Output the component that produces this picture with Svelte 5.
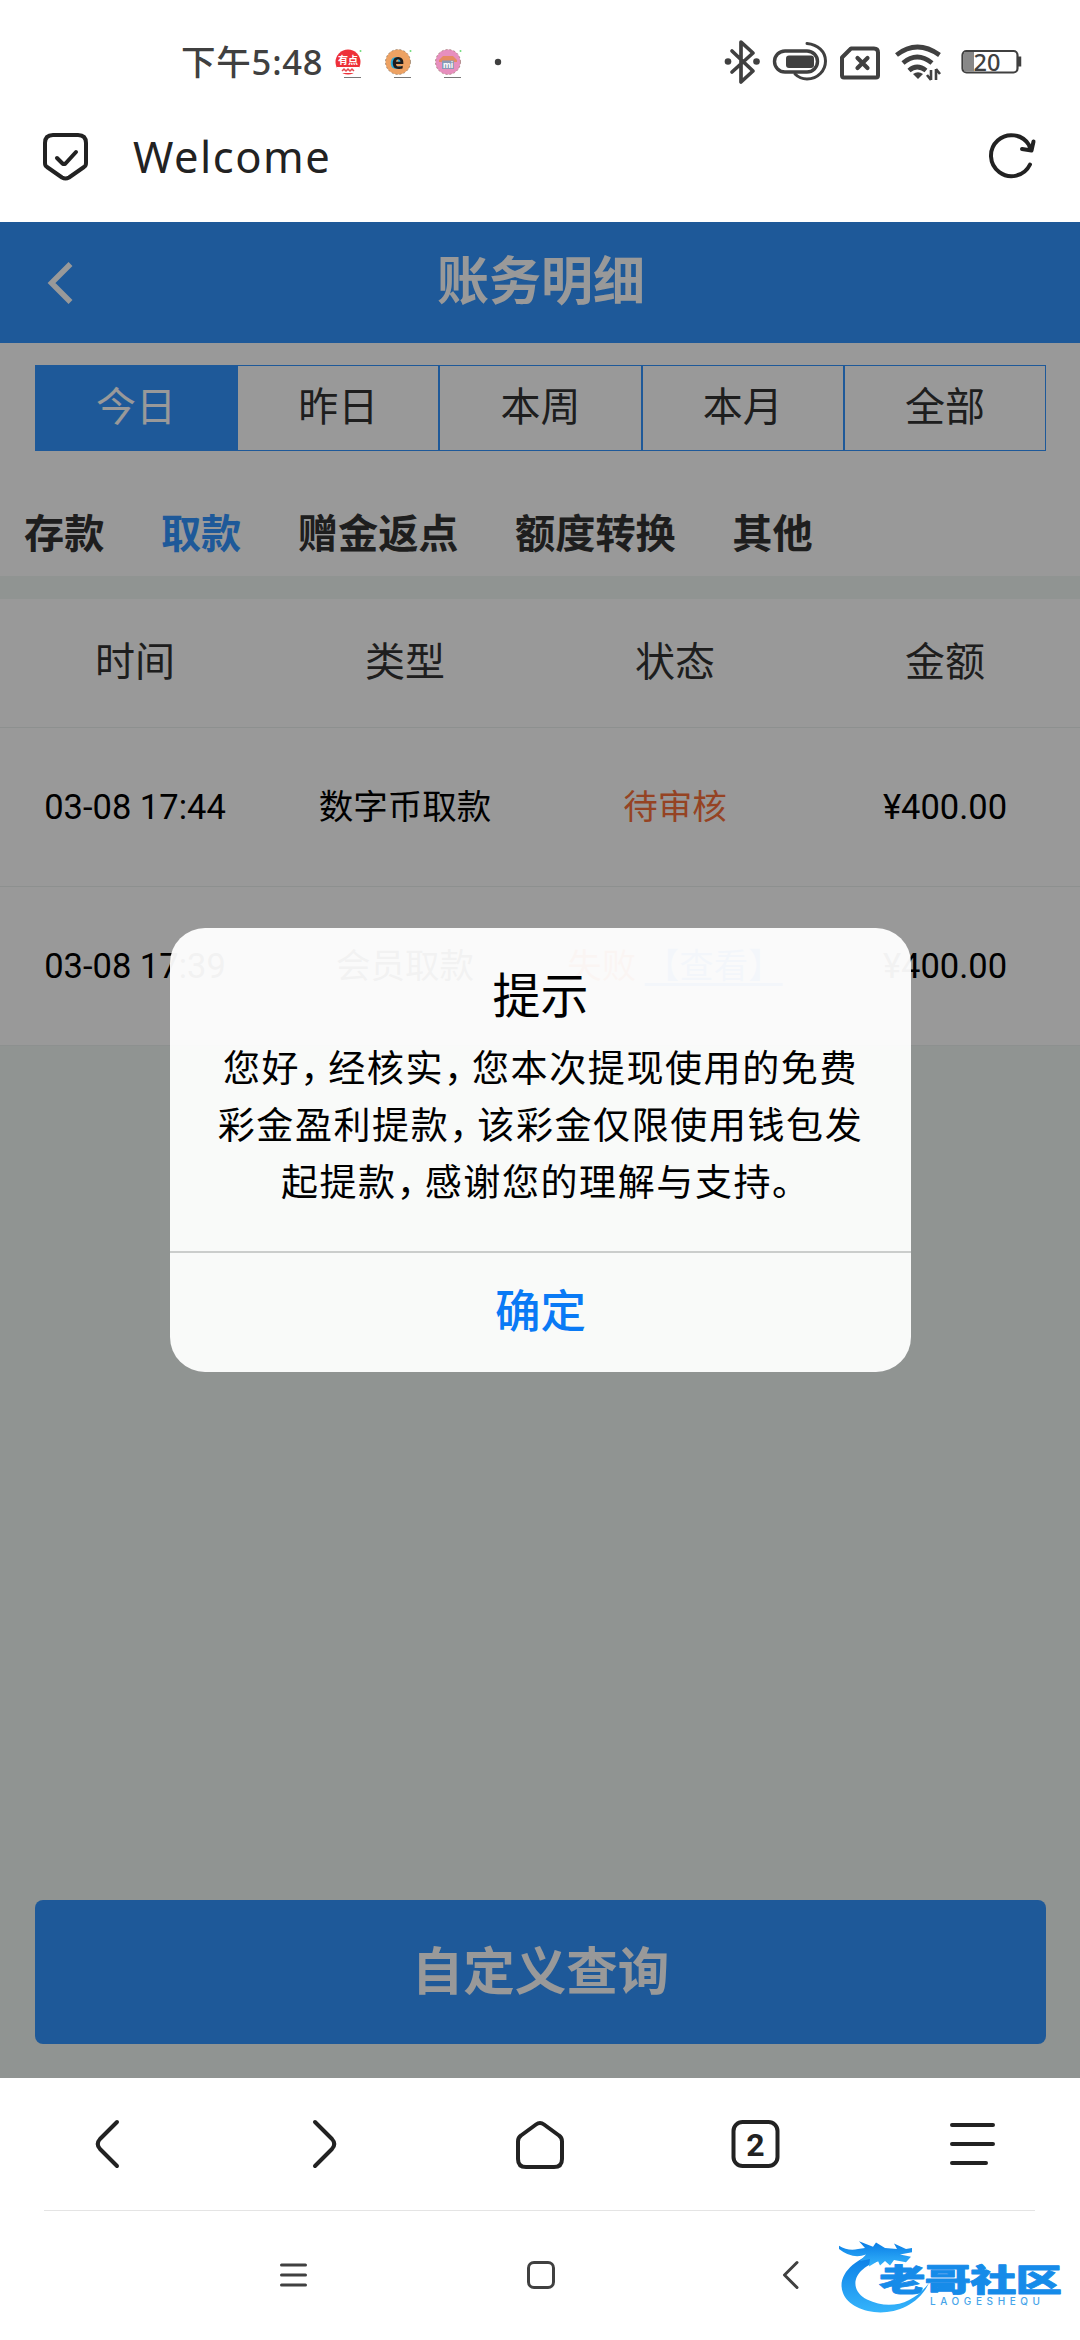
<script>
  const ranges = ['今日', '昨日', '本周', '本月', '全部'];
  const kinds = ['存款', '取款', '赠金返点', '额度转换', '其他'];
  const columns = ['时间', '类型', '状态', '金额'];
  const rows = [
    { time: '03-08 17:44', type: '数字币取款', status: '待审核', state: 'pending', amount: '¥400.00' },
    { time: '03-08 17:39', type: '会员取款', status: '失败', state: 'failed', link: '【查看】', amount: '¥400.00' },
  ];
  // the dialog text keeps its own line breaks
  const message = [
    '您好，经核实，您本次提现使用的免费',
    '彩金盈利提款，该彩金仅限使用钱包发',
    '起提款，感谢您的理解与支持。',
  ];
  // punctuation is set narrower than the hanzi, so split it off
  const parts = (line) => line.split(/([，。])/).filter(Boolean);

  let range = $state(0);
  let kind = $state(1);
</script>

<div class="screen">
  <div class="status">
    <span class="clock">下午5:48</span>
    <svg class="notes" width="180" height="40" viewBox="0 0 180 40">
      <g>
        <circle cx="18" cy="17" r="12.5" fill="#ee3038" />
        <path d="M6.500 22h23l-2 6H9z" fill="#fff" />
        <text x="18" y="18.500" class="badge" fill="#fff" font-size="10">有点</text>
        <path d="M12 26l2-2 2 2 2-2 2 2 2-2 2 2" fill="none" stroke="#e34b50" stroke-width="1.500" />
        <path d="M14 32.500h17" stroke="#777" />
        <circle cx="30.500" cy="6" r="1" fill="#6fdc7c" />
      </g>
      <g>
        <circle cx="68" cy="17" r="12.500" fill="#eda263" stroke="#765" stroke-width=".6" stroke-dasharray="2 2" />
        <text x="68" y="24" class="badge letter" fill="#1d1a1a" font-size="21">e</text>
        <path d="M64 32.500h17" stroke="#777" />
        <circle cx="80.500" cy="6" r="1" fill="#6fdc7c" />
      </g>
      <g>
        <circle cx="118" cy="17" r="12.500" fill="#e78fbe" stroke="#865" stroke-width=".6" stroke-dasharray="2 2" />
        <path d="M109 15l4-4h10l4 4v2h-18z" fill="#e58b62" />
        <rect x="112" y="15.500" width="12" height="8.500" fill="#8b9ab5" />
        <text x="118" y="22.500" class="badge" fill="#fff" font-size="8">mi</text>
        <path d="M114 32.500h17" stroke="#777" />
        <circle cx="130.500" cy="6" r="1" fill="#6fdc7c" />
      </g>
      <circle cx="168" cy="17" r="3.200" fill="#404040" />
    </svg>
    <svg class="system" width="310" height="50" viewBox="0 0 310 50" fill="none" stroke="#404040">
      <!-- bluetooth -->
      <path d="M12 14l21 20-12 11V5l12 11-21 19" stroke-width="3.700" stroke-linejoin="round" stroke-linecap="round" />
      <circle cx="8" cy="24.500" r="3.300" fill="#404040" stroke="none" />
      <circle cx="36.500" cy="24.500" r="3.300" fill="#404040" stroke="none" />
      <!-- linked device -->
      <rect x="54.500" y="14" width="43" height="21" rx="10.500" stroke-width="3.400" />
      <rect x="66" y="18.500" width="28" height="12.500" rx="3" fill="#404040" stroke="none" />
      <path d="M87 6.500c11 1 18.500 8 18.500 17.500S98 42 87 42c-5 0-9-2-12-5" stroke-width="3" stroke-linecap="round" />
      <!-- no sim -->
      <path d="M131 12h23q4 0 4 4v23q0 2-2 2h-32q-2 0-2-2V21z" transform="translate(0 -.5)" stroke-width="4" stroke-linejoin="round" />
      <path d="M137.500 21l10 10m0-10l-10 10" stroke-width="4.200" stroke-linecap="round" />
      <!-- wifi -->
      <path d="M176.500 18q20.500-16 43 0M183 26q14-12 29 0M189 33.500q8-7 17 0" stroke-width="4.700" />
      <path d="M193 37q5-3.500 10 0l-5 5z" fill="#404040" stroke="none" />
      <path d="M211 33v10m0 0l-4-5M216 43V32m0 0l4 5" stroke-width="2.600" />
      <!-- battery -->
      <rect x="242.500" y="14" width="55" height="21.500" rx="4" stroke-width="2.200" />
      <path d="M244 15h10v19.500h-10z" fill="#888" stroke="none" />
      <path d="M299.500 19.500v10" stroke-width="3.500" />
      <text x="253.500" y="33.500" class="level">20</text>
    </svg>
  </div>

  <div class="address">
    <svg width="48" height="52" viewBox="0 0 48 52" fill="none" stroke="#222" stroke-width="4" stroke-linecap="round" stroke-linejoin="round">
      <path d="M11 4h25q8 0 8 8v20q0 3-2 4L27 46.500q-3.500 2-7 0L5 36q-2-1-2-4V12q0-8 8-8z" />
      <path d="M15 27l5.500 5.500q1.500 1 3 0L34 21" />
    </svg>
    <span class="page-title">Welcome</span>
    <svg class="reload" width="50" height="52" viewBox="0 0 50 52" fill="none" stroke="#222" stroke-width="4" stroke-linecap="round" stroke-linejoin="round">
      <path d="M42 33.500A20.500 20.500 0 1 1 41 14l1.500 4.500" />
      <path d="M45.500 10.500l-2 9-9.500-1.500" />
    </svg>
  </div>

  <div class="web">
    <header>
      <svg width="30" height="44" viewBox="0 0 30 44"><path d="M25.500 3L6.500 22l19 19" fill="none" stroke="#fff" stroke-width="5.500" /></svg>
      <h1>账务明细</h1>
    </header>

    <section class="filters">
      <div class="ranges">
        {#each ranges as label, i}
          <button type="button" class:on={range === i} onclick={() => (range = i)}>{label}</button>
        {/each}
      </div>
      <div class="kinds">
        {#each kinds as label, i}
          <button type="button" class:on={kind === i} onclick={() => (kind = i)}>{label}</button>
        {/each}
      </div>
    </section>

    <section class="table">
      <div class="row head">
        {#each columns as c}<span>{c}</span>{/each}
      </div>
      {#each rows as r}
        <div class="row">
          <span>{r.time}</span>
          <span>{r.type}</span>
          <span class={r.state}>{r.status}{#if r.link}&nbsp;<u>{r.link}</u>{/if}</span>
          <span>{r.amount}</span>
        </div>
      {/each}
    </section>

    <button type="button" class="query">自定义查询</button>

    <div class="mask">
      <div class="dialog">
        <h2>提示</h2>
        <div class="message">
          {#each message as line}
            <p>{#each parts(line) as part}<span class:mark={part === '，' || part === '。'}>{part}</span>{/each}</p>
          {/each}
        </div>
        <button type="button" class="ok">确定</button>
      </div>
    </div>
  </div>

  <nav class="browser">
    <svg viewBox="0 0 60 60"><path d="M39 8L22 25q-4.500 5 0 10l17 17" /></svg>
    <svg viewBox="0 0 60 60"><path d="M21 8l17 17q4.500 5 0 10L21 52" /></svg>
    <svg viewBox="0 0 60 60"><path d="M26 10.500q4-3 8 0l15 11q3 2 3 6V45q0 8-8 8H16q-8 0-8-8V27.500q0-4 3-6z" /></svg>
    <svg viewBox="0 0 60 60">
      <rect x="8.500" y="8" width="44" height="44" rx="9" />
      <text x="30.500" y="41.500" class="count">2</text>
    </svg>
    <svg viewBox="0 0 60 60"><path d="M11 11h41M11 30h41M11 49h34" /></svg>
  </nav>
  <div class="keys">
    <svg viewBox="0 0 40 40"><path d="M8.500 10h24M8.500 20h24M8.500 30h24" /></svg>
    <svg viewBox="0 0 40 40"><rect x="7.500" y="7.500" width="25" height="25" rx="5.500" /></svg>
    <svg viewBox="0 0 40 40"><path d="M28 7.500L15.500 20 28 32.500" /></svg>
    <svg class="brand" viewBox="0 0 240 80">
      <defs>
        <linearGradient id="water" x1="0" y1="0" x2="0" y2="1">
          <stop offset="0" stop-color="#087be5" />
          <stop offset="1" stop-color="#35b4fb" />
        </linearGradient>
      </defs>
      <g fill="url(#water)" transform="translate(1 -5) scale(1 1.100)">
        <path d="M40 13C16 18 -3 34 4 50c9 22 66 28 86-9-16 19-39 25-62 15C9 47 12 26 47 19l-7-6z" />
        <path d="M0 7q9 5 19 3l7-1-6-6 14 5 3-4 9 5 12 1-3-5 12 5 6-1v4l-12 2 11 2-5 5-12-2-4 5-5-4-5 4-2-4-9 5 1-7-10 2 6-6q-13 5-27-5z" />
      </g>
      <g transform="translate(41 0) scale(1.500 1)">
        <text x="0" y="48" class="brand-cn" textLength="122" lengthAdjust="spacing">老哥社区</text>
      </g>
      <text x="92" y="62" class="brand-en" textLength="110" lengthAdjust="spacing">LAOGESHEQU</text>
    </svg>
  </div>
</div>

<style>
  :global(body) { margin: 0; background: #fff; }
  .screen {
    width: 1080px;
    height: 2340px;
    display: flex;
    flex-direction: column;
    overflow: hidden;
    background: #fff;
    font-family: Roboto, "Noto Sans CJK SC", sans-serif;
  }
  h1, h2, p { margin: 0; }
  button { border: 0; padding: 0; margin: 0; background: none; font: inherit; color: inherit; }
  svg { display: block; flex: none; }

  .status { height: 110px; box-sizing: border-box; padding: 37px 0 0 181px; display: flex; align-items: flex-start; }
  .clock {
    width: 149px;
    font: 500 34.500px/50px "Noto Sans", "Noto Sans CJK SC", sans-serif;
    letter-spacing: 0.800px;
    color: #404040;
    white-space: nowrap;
  }
  .notes { margin-top: 8px; }
  .system { margin: 0 0 0 210px; }
  .badge { font-family: "Noto Sans", "Noto Sans CJK SC", sans-serif; font-weight: 700; text-anchor: middle; }
  .letter { filter: drop-shadow(-1.500px 0 0 #29a9d8); }
  .level { font: 500 23.500px "Noto Sans", sans-serif; fill: #404040; stroke: none; }

  .address { height: 112px; box-sizing: border-box; padding: 21px 42px 0 42px; display: flex; }
  .page-title { margin-left: 43px; font: 43.500px/50px "Noto Sans", sans-serif; letter-spacing: 1.500px; color: #222; }
  .reload { margin-left: auto; }

  .web { position: relative; height: 1856px; display: flex; flex-direction: column; background: #f0f7f3; color: #333; }
  header { height: 121px; display: flex; align-items: center; padding: 0 45px; background: #3395ff; color: #fff; }
  h1 { flex: 1; margin-right: 28px; text-align: center; font-size: 52px; line-height: 76px; }

  .filters { height: 233px; background: #fff; }
  .ranges { display: flex; margin: 0 34px 0 35px; padding-top: 22px; }
  .ranges button {
    flex: 1;
    height: 86px;
    box-sizing: border-box;
    border: 1px solid #3395ff;
    font-size: 40px;
    line-height: 60px;
  }
  .ranges .on { background: #3395ff; color: #fff; }
  .kinds { display: flex; gap: 56.500px; padding: 54px 24px 0; font-size: 40.200px; line-height: 60px; font-weight: 700; }
  .kinds .on { color: #3395ff; }

  .table { margin-top: 23px; background: #fff; color: #000; font-size: 34.500px; line-height: 50px; }
  .row { height: 159px; box-sizing: border-box; display: flex; align-items: center; border-bottom: 1px solid #ebf0ee; }
  .row span { width: 270px; text-align: center; white-space: nowrap; }
  .head { height: 129px; font-size: 40px; color: #333; }
  .row .pending, .row .failed { color: #f9713b; }
  .row .failed u { color: #3395ff; text-underline-offset: 5px; }

  .query {
    height: 144px;
    margin: auto 34px 34px 35px;
    padding-top: 2px;
    border-radius: 8px;
    background: #3395ff;
    color: #fff;
    font-size: 51.500px;
    line-height: 70px;
    font-weight: 700;
  }

  .mask { position: absolute; inset: 0; background: rgba(0, 0, 0, 0.4); }
  .dialog {
    width: 741px;
    height: 444px;
    margin: 706px 0 0 170px;
    display: flex;
    flex-direction: column;
    border-radius: 35px;
    background: rgba(255, 255, 255, 0.95);
    color: #000;
    text-align: center;
    overflow: hidden;
  }
  h2 { padding-top: 37px; font-size: 48px; line-height: 64px; font-weight: 400; }
  .message { flex: 1; padding-top: 12px; font-size: 37px; line-height: 57px; letter-spacing: 1.600px; white-space: nowrap; }
  .mark { letter-spacing: -9px; }
  .ok { height: 121px; border-top: 2px solid #cbcdcc; color: #0a7af5; font-size: 45.500px; line-height: 60px; font-weight: 500; }

  .browser {
    height: 133px;
    box-sizing: border-box;
    margin: 0 45px 0 44px;
    padding: 0 34px;
    display: flex;
    align-items: center;
    justify-content: space-between;
    border-bottom: 1px solid #e4e4e4;
  }
  .browser svg { width: 60px; height: 60px; fill: none; stroke: #222; stroke-width: 4; stroke-linecap: round; stroke-linejoin: round; }
  .browser .count { font: 700 32px Roboto, sans-serif; fill: #222; stroke: none; text-anchor: middle; }

  .keys { display: flex; height: 129px; padding-left: 273px; }
  .keys svg { width: 40px; height: 40px; margin: 44px 208px 0 0; fill: none; stroke: #404040; stroke-width: 3; stroke-linecap: round; stroke-linejoin: round; }
  .keys svg:nth-child(3) { margin-right: 29px; }
  .keys .brand { width: 240px; height: 80px; margin: 32px 0 0; stroke: none; overflow: visible; }
  .brand-cn { font: 900 31px "Noto Sans CJK SC", sans-serif; fill: #168be9; stroke: #168be9; stroke-width: 0.800; }
  .brand-en { font: 500 10px Inter, sans-serif; fill: #46a4e9; }
</style>
